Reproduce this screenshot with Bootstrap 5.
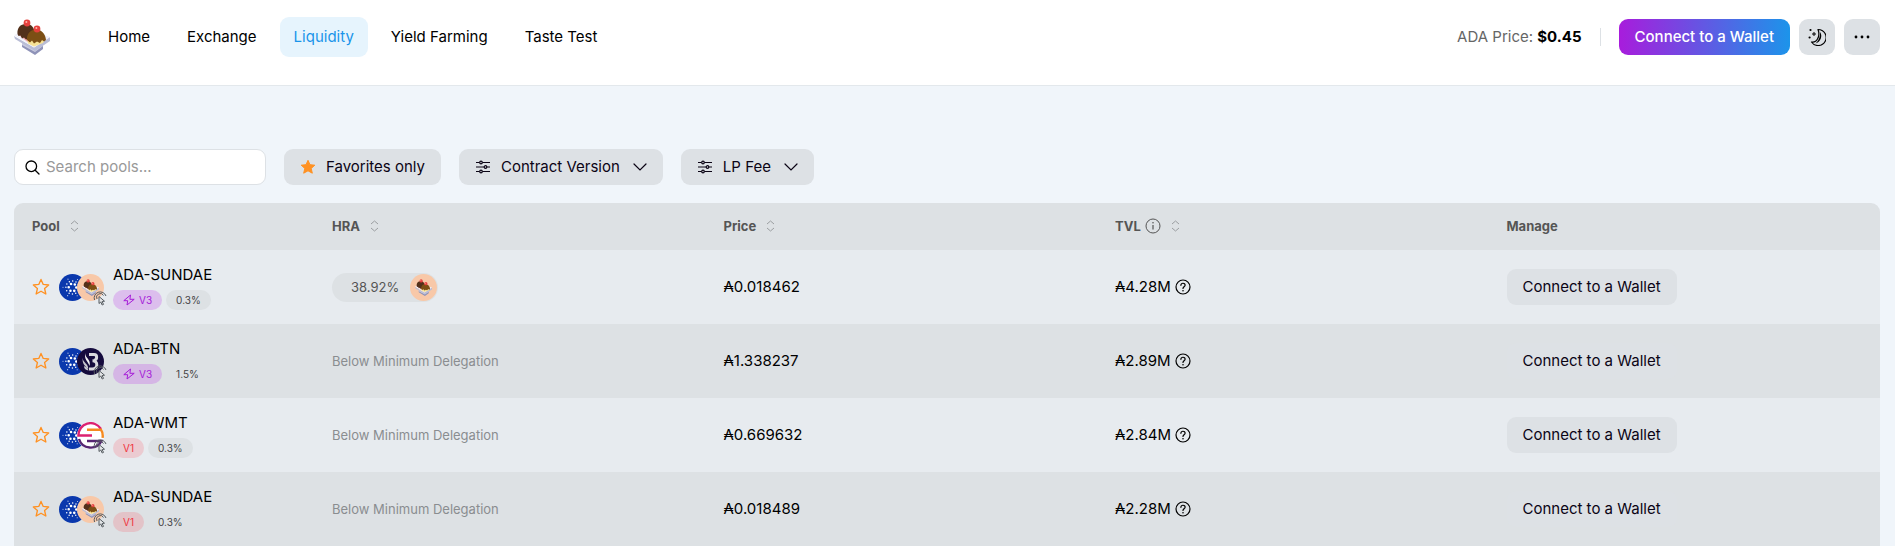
<!DOCTYPE html>
<html lang="en">
<head>
<meta charset="utf-8">
<meta name="viewport" content="width=device-width, initial-scale=1">
<title>Liquidity pools</title>
<link href="https://cdn.jsdelivr.net/npm/bootstrap@5.3.0/dist/css/bootstrap.min.css" rel="stylesheet">
<style>
  body { font-family: Inter, "DejaVu Sans", sans-serif; font-size: 15px; line-height: 20px; color: #000; background: #f0f5fa; }
  svg { display: block; flex: none; }
  .page-pad { padding-left: 14px; padding-right: 15px; }
  .top-bar { min-height: 86px; padding-top: 17px; border-bottom: 1px solid #e3e8ec; background: #fff; }
  .top-row { height: 40px; }
  .main-nav { margin-left: 44px; gap: 9px; }
  .main-nav .nav-link { padding: 10px 14px; border-radius: 9px; color: #000; }
  .main-nav .nav-link.active { background: #e6f4fd; color: #1a94ea; }
  .ada-price { color: #666; }
  .ada-price strong { color: #000; }
  .divider { width: 1px; height: 18px; margin: 0 18px; background: #dde1e5; }
  .btn-pool { height: 36px; padding: 0 16px; border: 0; border-radius: 9px; background: #dde1e5; font-size: 15px; color: #0b0415; white-space: nowrap; }
  .btn-wallet { background: linear-gradient(90deg, #a81cdc, #1c94ea); color: #fff; font-weight: 500; }
  .btn-square { width: 36px; margin-left: 9px; padding: 0; }
  .filters { padding-top: 63px; padding-bottom: 18px; gap: 18px; }
  .search-box { width: 252px; height: 36px; padding: 0 10px; gap: 6px; border: 1px solid #dde1e5; border-radius: 9px; background: #fff; }
  .search-box input { min-width: 0; border: 0; outline: 0; padding: 0; background: transparent; }
  .search-box input::placeholder { color: #999; opacity: 1; }
  .filters .btn-pool { gap: 10px; }
  .chevron { margin-left: 3px; }
  .pools { table-layout: fixed; border-radius: 9px 9px 0 0; overflow: hidden; }
  .pools col.pool-col { width: 300px; }
  .pools th { height: 47px; padding: 0 18px 2px; background: #dde1e4; font-size: 13px; font-weight: 700; color: #555; }
  .pools td { height: 74px; padding: 0 18px; background: #dde1e4; }
  .pools tbody tr:nth-child(odd) td { background: #e7ebef; }
  .sort { width: 9px; height: 12px; margin-left: 10px; padding: 0; border: 0; background: none; color: #9a9ea1; }
  .star { padding: 0; border: 0; margin-right: 9px; background: none; }
  .coins { position: relative; width: 45px; height: 27px; margin-right: 9px; }
  .coins .second { margin-left: -9px; }
  .coins .tap { position: absolute; left: 34px; top: 16px; }
  .tags { margin-top: 5px; gap: 4px; }
  .tag { height: 20px; padding: 0 10px; gap: 4px; border-radius: 10px; background: #dde1e4; font-size: 10px; color: #444; }
  .tag-v3 { background: rgba(190, 60, 230, .26); color: #a51bd8; }
  .tag-v1 { background: rgba(255, 60, 70, .18); color: #f0353f; }
  .hra { width: 106px; height: 29px; padding: 0 1px 0 19px; border-radius: 15px; background: #dde1e4; font-size: 13px; color: #555; }
  .below { font-size: 13px; color: #8a8d90; }
</style>
</head>
<body>
<svg width="0" height="0" class="position-absolute" aria-hidden="true">
  <defs>
    <symbol id="sundae" viewBox="0 0 36 36">
      <path d="M8 25l13 7 8-6v4l-8 6-13-8z" fill="#8f93b8"/>
      <path d="M8 23l13 7 8-6v3l-8 6-13-7z" fill="#c9cbe0"/>
      <path d="M0 17l20 11.500L36 18v4L21 32 1 20z" fill="#b9bdd6"/>
      <path d="M0 16L8 13h14l14 5-16 10.500z" fill="#f1f1fa"/>
      <path d="M3.500 15h8l4 4-2 4z" fill="#f3a5aa"/>
      <path d="M13 20h18l-2 4-9 3.500-6-3z" fill="#f7e296"/>
      <path d="M3.500 15C3 9 6 5 12 5s8.500 4 8.500 9L14 20l-2 .5-2-2-2 1-1.500-3-2 .5z" fill="#52301a"/>
      <path d="M13 21c-.5-6 3.500-10.500 9-10.500S31.500 15 32 21l-2 1.500-2-1.500-2 3-3-1.500-3 2-2-3-2 2z" fill="#7c4f14"/>
      <circle cx="13" cy="4" r="3.400" fill="#e5403d"/><circle cx="23" cy="10" r="3.400" fill="#e5403d"/>
      <circle cx="12.400" cy="3" r="1" fill="#ffb3a8"/><circle cx="22.400" cy="9" r="1" fill="#ffb3a8"/>
    </symbol>
    <symbol id="coin-sundae" viewBox="0 0 27 27">
      <circle cx="13.500" cy="13.500" r="13.500" fill="#f8c8a8"/>
      <use href="#sundae" x="5" y="5" width="17" height="17"/>
    </symbol>
    <symbol id="coin-ada" viewBox="0 0 27 27">
      <circle cx="13.500" cy="13.500" r="13.500" fill="#0a38ad"/>
      <g fill="none" stroke="#fff" stroke-linecap="round">
        <circle cx="13.500" cy="13.500" r="3.800" stroke-width="2.600" stroke-dasharray="0 3.980"/>
        <circle cx="13.500" cy="13.500" r="6.600" stroke-width="1.500" stroke-dasharray="0 3.456"/>
        <circle cx="13.500" cy="13.500" r="9.500" stroke-width="1.100" stroke-dasharray="0 9.948" opacity=".8"/>
      </g>
    </symbol>
    <symbol id="coin-btn" viewBox="0 0 27 27">
      <circle cx="13.500" cy="13.500" r="13.500" fill="#150b3d"/>
      <path d="M12 6.500h5c3.500 0 3.500 5 0 6M15.500 12.700c6 0 5.500 8.300 0 8.300H12" fill="none" stroke="#d9d9de" stroke-width="3"/>
      <path d="M8.500 5c-1 5 6 6 4 13C11 13 6.500 11 8.500 5z" fill="#f2f2f4"/>
      <path d="M5.800 10c0 5 5.500 5 5.500 11-3-3-6.500-5-5.500-11zM7 18c2 1 4 2 4.500 4.500C9 22 7 21 7 18z" fill="#c6c6ce"/>
    </symbol>
    <symbol id="coin-wmt" viewBox="0 0 27 27">
      <circle cx="13.500" cy="13.500" r="13.500" fill="#fff"/>
      <g fill="none" stroke-width="2.400">
        <path d="M24 7A12.200 12.200 0 0 0 1.400 13.500H15" stroke="#dc2170"/>
        <path d="M10 7.800h14c1.500 2 2 5 1.600 8" stroke="#f58a20"/>
        <path d="M2 17a12.200 12.200 0 0 0 22.500 2H10" stroke="#562572"/>
      </g>
    </symbol>
    <symbol id="tap" viewBox="0 0 14 16">
      <g fill="none" stroke="#555b60">
        <path d="M1.500 10A6 6 0 1 1 13 6M4 9A3.500 3.500 0 1 1 10.500 5.500"/>
        <path d="M6 6.500v7l1.800-1.500 1.400 3 1.300-.6-1.400-2.900 2.400-.3z" fill="#e4e6e8"/>
      </g>
    </symbol>
    <symbol id="star-line" viewBox="0 0 16 16">
      <path d="M8 1.300l2 4.400 4.800.5-3.600 3.200 1.100 4.800L8 11.800l-4.300 2.400 1.100-4.800L1.200 6.200 6 5.700z" fill="none" stroke="#ff9122" stroke-width="1.200" stroke-linejoin="round"/>
    </symbol>
    <symbol id="sorter" viewBox="0 0 9 12">
      <path d="M1 4l3.500-3L8 4M1 8l3.500 3L8 8" fill="none" stroke="currentColor"/>
    </symbol>
    <symbol id="bolt" viewBox="0 0 12 12">
      <path d="M7.500 1L.8 6.700h3.900L4 11l7.200-5.700H6.900z" fill="none" stroke="currentColor" stroke-linejoin="round"/>
    </symbol>
    <symbol id="help" viewBox="0 0 16 16">
      <g fill="none" stroke="currentColor" stroke-width="1.200" stroke-linecap="round"><circle cx="8" cy="8" r="7"/><path d="M5.900 6.300C6 3.500 10.300 3.700 10.100 6.300 10 7.800 8 7.900 8 9.500"/></g>
      <circle cx="8" cy="11.800" r=".8" fill="currentColor"/>
    </symbol>
    <symbol id="sliders" viewBox="0 0 16 14">
      <g fill="none" stroke="currentColor" stroke-width="1.200"><path d="M1 2.500h3.500M7.500 2.500H15M1 7h8M12 7h3M1 11.500h3.500M7.500 11.500H15"/><circle cx="6" cy="2.500" r="1.300"/><circle cx="10.500" cy="7" r="1.300"/><circle cx="6" cy="11.500" r="1.300"/></g>
    </symbol>
    <symbol id="chevron" viewBox="0 0 14 8">
      <path d="M1 1l6 6 6-6" fill="none" stroke="currentColor" stroke-width="1.200" stroke-linecap="round"/>
    </symbol>
  </defs>
</svg>

<header class="top-bar page-pad">
  <div class="top-row d-flex align-items-center">
    <a href="#" aria-label="Home page"><svg width="36" height="36"><use href="#sundae"/></svg></a>
    <nav class="main-nav nav" aria-label="Main">
      <a class="nav-link" href="#">Home</a>
      <a class="nav-link" href="#">Exchange</a>
      <a class="nav-link active" href="#" aria-current="page">Liquidity</a>
      <a class="nav-link" href="#">Yield Farming</a>
      <a class="nav-link" href="#">Taste Test</a>
    </nav>
    <div class="d-flex align-items-center ms-auto">
      <span class="ada-price">ADA Price: <strong>$0.45</strong></span>
      <span class="divider"></span>
      <button class="btn btn-pool btn-wallet" type="button">Connect to a Wallet</button>
      <button class="btn btn-pool btn-square d-flex align-items-center justify-content-center" type="button" aria-label="Dark mode">
        <svg width="18" height="18" viewBox="0 0 18 18"><path d="M10 1.500A8 8 0 1 1 3.500 14C9 15 12.500 8 10 1.500z" fill="none" stroke="#000" stroke-width="1.200" stroke-linejoin="round"/><path d="M12 4c3 4 .5 10-4.500 11.500C10.500 13 12.500 8.500 12 4z"/><path d="M6 4v4M4 6h4" stroke="#000"/><circle cx="2.500" cy="2" r="1.100"/><circle cx="1.600" cy="9.500" r="1.100"/></svg>
      </button>
      <button class="btn btn-pool btn-square d-flex align-items-center justify-content-center" type="button" aria-label="More">
        <svg width="16" height="4" viewBox="0 0 16 4"><circle cx="2" cy="2" r="1.400"/><circle cx="8" cy="2" r="1.400"/><circle cx="14" cy="2" r="1.400"/></svg>
      </button>
    </div>
  </div>
</header>

<main class="page-pad">
  <div class="filters d-flex flex-wrap">
    <label class="search-box d-flex align-items-center">
      <svg width="15" height="15" viewBox="0 0 15 15"><g fill="none" stroke="#000" stroke-width="1.300" stroke-linecap="round"><circle cx="6.300" cy="6.300" r="5.300"/><path d="M10.200 10.200L14 14"/></g></svg>
      <input class="flex-grow-1" type="search" placeholder="Search pools..." aria-label="Search pools">
    </label>
    <button class="btn btn-pool d-flex align-items-center" type="button">
      <svg width="16" height="16" viewBox="0 0 16 16"><path d="M8 1.300l2 4.400 4.800.5-3.600 3.200 1.100 4.800L8 11.800l-4.300 2.400 1.100-4.800L1.200 6.200 6 5.700z" fill="#ff9122" stroke="#ff9122" stroke-linejoin="round"/></svg>
      Favorites only
    </button>
    <button class="btn btn-pool d-flex align-items-center" type="button">
      <svg width="16" height="14"><use href="#sliders"/></svg>Contract Version<svg class="chevron" width="14" height="8"><use href="#chevron"/></svg>
    </button>
    <button class="btn btn-pool d-flex align-items-center" type="button">
      <svg width="16" height="14"><use href="#sliders"/></svg>LP Fee<svg class="chevron" width="14" height="8"><use href="#chevron"/></svg>
    </button>
  </div>

  <table class="pools w-100 align-middle">
    <colgroup><col class="pool-col"><col><col><col><col></colgroup>
    <thead>
      <tr>
        <th scope="col"><div class="d-flex align-items-center">Pool<button class="sort" type="button" aria-label="Sort by pool"><svg width="9" height="12"><use href="#sorter"/></svg></button></div></th>
        <th scope="col"><div class="d-flex align-items-center">HRA<button class="sort" type="button" aria-label="Sort by HRA"><svg width="9" height="12"><use href="#sorter"/></svg></button></div></th>
        <th scope="col"><div class="d-flex align-items-center">Price<button class="sort" type="button" aria-label="Sort by price"><svg width="9" height="12"><use href="#sorter"/></svg></button></div></th>
        <th scope="col"><div class="d-flex align-items-center">TVL<svg class="ms-1" width="16" height="16" viewBox="0 0 16 16"><circle cx="8" cy="8" r="7" fill="none" stroke="#555"/><path d="M8 7v4.500" stroke="#555" stroke-width="1.200"/><circle cx="8" cy="4.800" r=".8" fill="#555"/></svg><button class="sort" type="button" aria-label="Sort by TVL"><svg width="9" height="12"><use href="#sorter"/></svg></button></div></th>
        <th scope="col">Manage</th>
      </tr>
    </thead>
    <tbody>
      <tr>
        <td><div class="d-flex align-items-center">
          <button class="star" type="button" aria-label="Add to favorites"><svg width="18" height="18"><use href="#star-line"/></svg></button>
          <div class="coins d-flex"><svg width="27" height="27"><use href="#coin-ada"/></svg><svg class="second" width="27" height="27"><use href="#coin-sundae"/></svg><svg class="tap" width="14" height="16"><use href="#tap"/></svg></div>
          <div><div>ADA-SUNDAE</div><div class="tags d-flex"><span class="tag tag-v3 d-flex align-items-center"><svg width="12" height="12"><use href="#bolt"/></svg>V3</span><span class="tag">0.3%</span></div></div>
        </div></td>
        <td><div class="hra d-flex align-items-center justify-content-between">38.92%<svg width="27" height="27"><use href="#coin-sundae"/></svg></div></td>
        <td>₳0.018462</td>
        <td><div class="d-flex align-items-center">₳4.28M<svg class="ms-1" width="16" height="16"><use href="#help"/></svg></div></td>
        <td><button class="btn btn-pool" type="button">Connect to a Wallet</button></td>
      </tr>
      <tr>
        <td><div class="d-flex align-items-center">
          <button class="star" type="button" aria-label="Add to favorites"><svg width="18" height="18"><use href="#star-line"/></svg></button>
          <div class="coins d-flex"><svg width="27" height="27"><use href="#coin-ada"/></svg><svg class="second" width="27" height="27"><use href="#coin-btn"/></svg><svg class="tap" width="14" height="16"><use href="#tap"/></svg></div>
          <div><div>ADA-BTN</div><div class="tags d-flex"><span class="tag tag-v3 d-flex align-items-center"><svg width="12" height="12"><use href="#bolt"/></svg>V3</span><span class="tag">1.5%</span></div></div>
        </div></td>
        <td class="below">Below Minimum Delegation</td>
        <td>₳1.338237</td>
        <td><div class="d-flex align-items-center">₳2.89M<svg class="ms-1" width="16" height="16"><use href="#help"/></svg></div></td>
        <td><button class="btn btn-pool" type="button">Connect to a Wallet</button></td>
      </tr>
      <tr>
        <td><div class="d-flex align-items-center">
          <button class="star" type="button" aria-label="Add to favorites"><svg width="18" height="18"><use href="#star-line"/></svg></button>
          <div class="coins d-flex"><svg width="27" height="27"><use href="#coin-ada"/></svg><svg class="second" width="27" height="27"><use href="#coin-wmt"/></svg><svg class="tap" width="14" height="16"><use href="#tap"/></svg></div>
          <div><div>ADA-WMT</div><div class="tags d-flex"><span class="tag tag-v1">V1</span><span class="tag">0.3%</span></div></div>
        </div></td>
        <td class="below">Below Minimum Delegation</td>
        <td>₳0.669632</td>
        <td><div class="d-flex align-items-center">₳2.84M<svg class="ms-1" width="16" height="16"><use href="#help"/></svg></div></td>
        <td><button class="btn btn-pool" type="button">Connect to a Wallet</button></td>
      </tr>
      <tr>
        <td><div class="d-flex align-items-center">
          <button class="star" type="button" aria-label="Add to favorites"><svg width="18" height="18"><use href="#star-line"/></svg></button>
          <div class="coins d-flex"><svg width="27" height="27"><use href="#coin-ada"/></svg><svg class="second" width="27" height="27"><use href="#coin-sundae"/></svg><svg class="tap" width="14" height="16"><use href="#tap"/></svg></div>
          <div><div>ADA-SUNDAE</div><div class="tags d-flex"><span class="tag tag-v1">V1</span><span class="tag">0.3%</span></div></div>
        </div></td>
        <td class="below">Below Minimum Delegation</td>
        <td>₳0.018489</td>
        <td><div class="d-flex align-items-center">₳2.28M<svg class="ms-1" width="16" height="16"><use href="#help"/></svg></div></td>
        <td><button class="btn btn-pool" type="button">Connect to a Wallet</button></td>
      </tr>
    </tbody>
  </table>
</main>
<script src="https://cdn.jsdelivr.net/npm/bootstrap@5.3.0/dist/js/bootstrap.bundle.min.js"></script>
</body>
</html>
